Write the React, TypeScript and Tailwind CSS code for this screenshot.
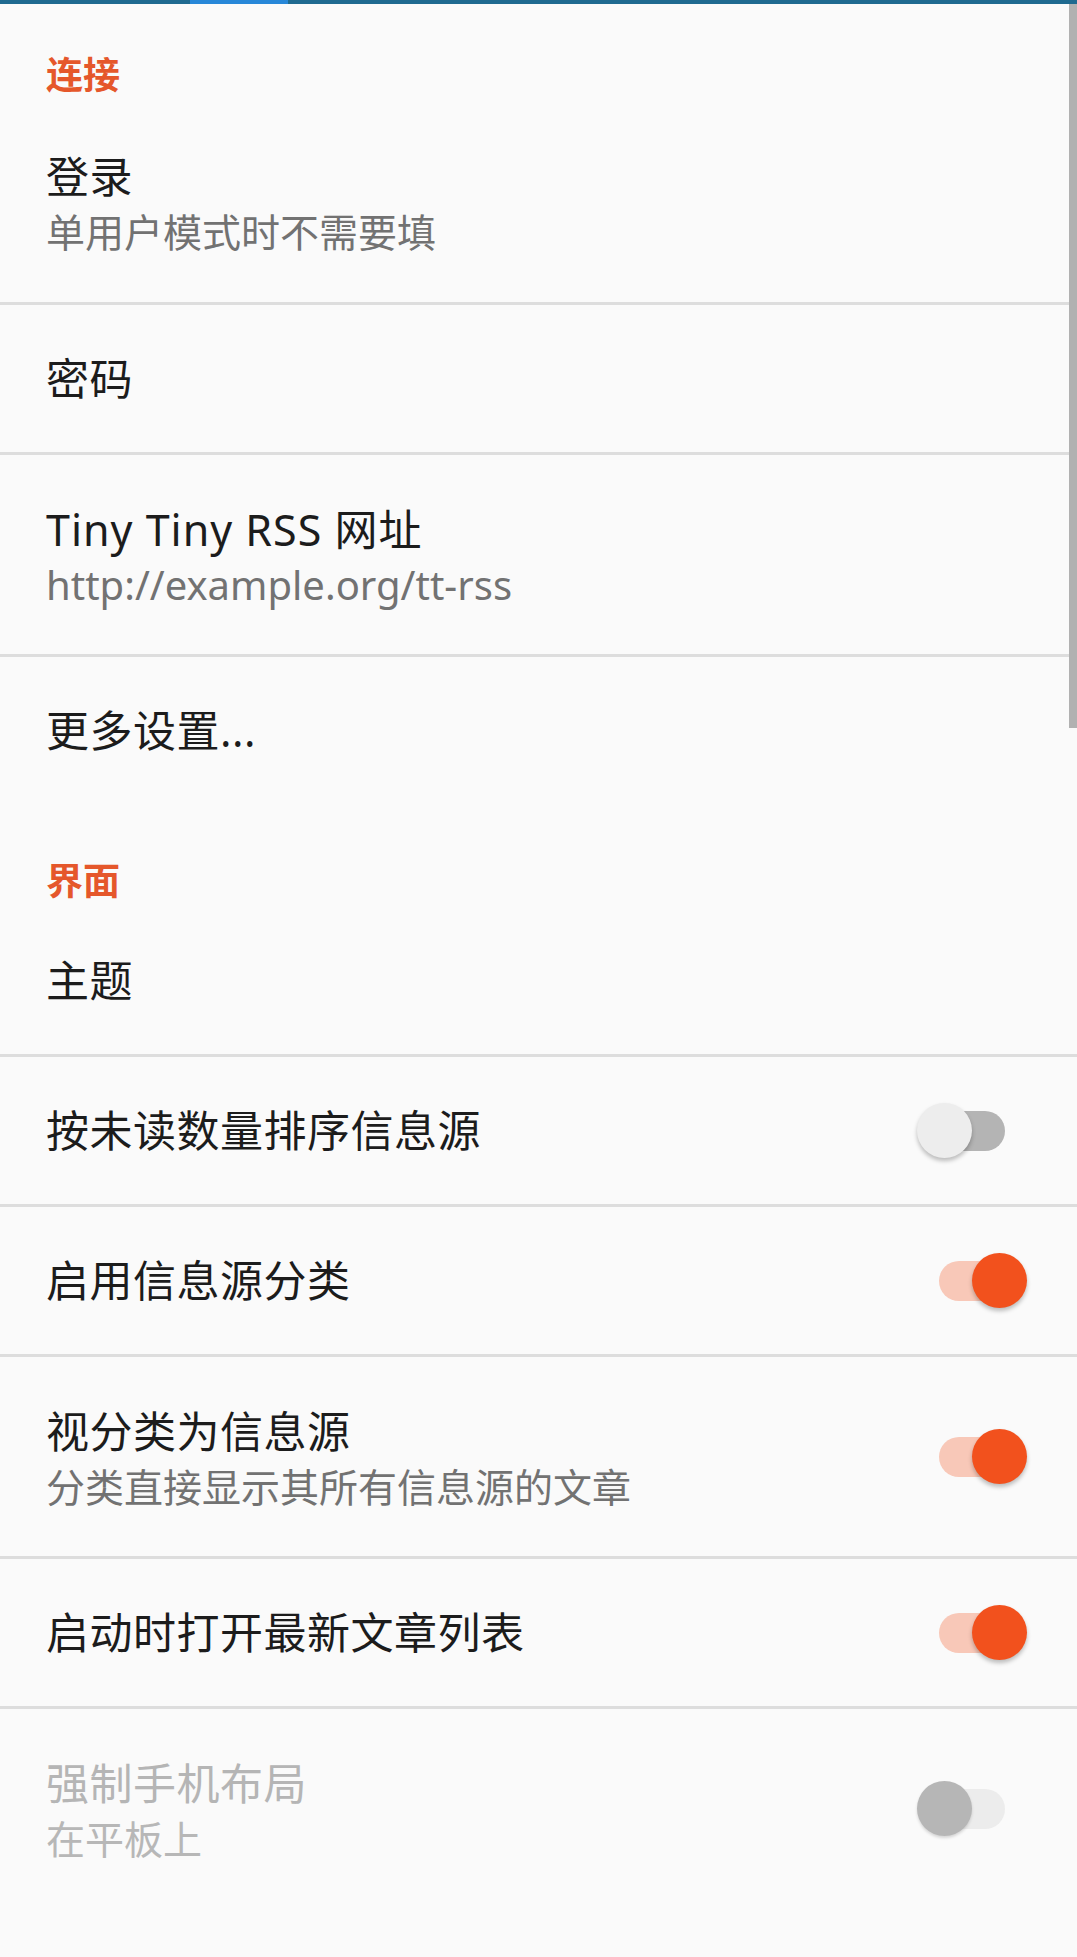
import React from 'react'

type Pref = {
  title: string
  summary?: string
  latin?: boolean
  toggle?: 'on' | 'off' | 'disabled'
  divider?: boolean
}

const font = { fontFamily: '"Noto Sans", "Noto Sans CJK SC", sans-serif' }

const Switch: React.FC<{ state: 'on' | 'off' | 'disabled' }> = ({ state }) => {
  const on = state === 'on'
  const track = on ? 'bg-[#f8c8b8]' : state === 'off' ? 'bg-[#b4b4b4]' : 'bg-[#ececec]'
  const thumb = on
    ? 'left-[55px] bg-[#f2511d] shadow-[0_3px_4px_rgba(0,0,0,0.25)]'
    : state === 'off'
      ? 'left-0 bg-[#ededed] shadow-[0_3px_4px_rgba(0,0,0,0.25)]'
      : 'left-0 bg-[#b6b6b6] shadow-[0_2px_3px_rgba(0,0,0,0.15)]'
  return (
    <div className="relative w-[110px] h-[56px] shrink-0">
      <div className={`absolute left-[22px] top-[8px] w-[66px] h-[40px] rounded-full ${track}`} />
      <div className={`absolute top-0 w-[55px] h-[55px] rounded-full ${thumb}`} />
    </div>
  )
}

const Header: React.FC<{ label: string; first?: boolean }> = ({ label, first }) => (
  <div className={`flex items-end pl-[46px] ${first ? 'h-[97px]' : 'h-[103px]'}`}>
    <span className="text-[37px] leading-[52px] font-bold text-[#e5572b]">{label}</span>
  </div>
)

const Row: React.FC<{ pref: Pref; tall?: boolean }> = ({ pref, tall }) => {
  const disabled = pref.toggle === 'disabled'
  const twoLine = !!pref.summary
  return (
    <>
      <div
        className={`flex items-center justify-between pl-[46px] pr-[50px] ${twoLine ? (tall ? 'h-[201px]' : 'h-[199px]') : 'h-[147px]'}`}
      >
        <div className={`flex flex-col ${twoLine ? 'mt-[5px]' : ''}`}>
          <span
            className={`text-[43px] leading-[56px] ${pref.latin ? 'tracking-[1px]' : 'tracking-[0.5px]'} ${disabled ? 'text-[#b5b5b5]' : 'text-[#1c1c1c]'}`}
          >
            {pref.title}
          </span>
          {pref.summary && (
            <span
              className={`leading-[54px] ${pref.latin ? 'text-[40px]' : 'text-[39px]'} ${disabled ? 'text-[#b7b7b7]' : 'text-[#727272]'}`}
            >
              {pref.summary}
            </span>
          )}
        </div>
        {pref.toggle && <Switch state={pref.toggle} />}
      </div>
      {pref.divider && <div className="h-[3px] bg-[#dddddd]" />}
    </>
  )
}

export default function App() {
  return (
    <div className="relative w-[1077px] h-[1957px] bg-[#fafafa] overflow-hidden" style={font}>
      <div className="relative h-[4px] bg-[#1f6a90]">
        <div className="absolute left-[190px] top-0 w-[98px] h-[4px] bg-[#2787d8]" />
      </div>
      <div className="absolute right-0 top-[4px] w-[8px] h-[724px] bg-[#b1b1b1]" />

      <Header label="连接" first />
      <Row pref={{ title: '登录', summary: '单用户模式时不需要填', divider: true }} tall />
      <Row pref={{ title: '密码', divider: true }} />
      <Row pref={{ title: 'Tiny Tiny RSS 网址', summary: 'http://example.org/tt-rss', latin: true, divider: true }} />
      <Row pref={{ title: '更多设置...' }} />

      <Header label="界面" />
      <Row pref={{ title: '主题', divider: true }} />
      <Row pref={{ title: '按未读数量排序信息源', toggle: 'off', divider: true }} />
      <Row pref={{ title: '启用信息源分类', toggle: 'on', divider: true }} />
      <Row pref={{ title: '视分类为信息源', summary: '分类直接显示其所有信息源的文章', toggle: 'on', divider: true }} />
      <Row pref={{ title: '启动时打开最新文章列表', toggle: 'on', divider: true }} />
      <Row pref={{ title: '强制手机布局', summary: '在平板上', toggle: 'disabled' }} />
    </div>
  )
}
